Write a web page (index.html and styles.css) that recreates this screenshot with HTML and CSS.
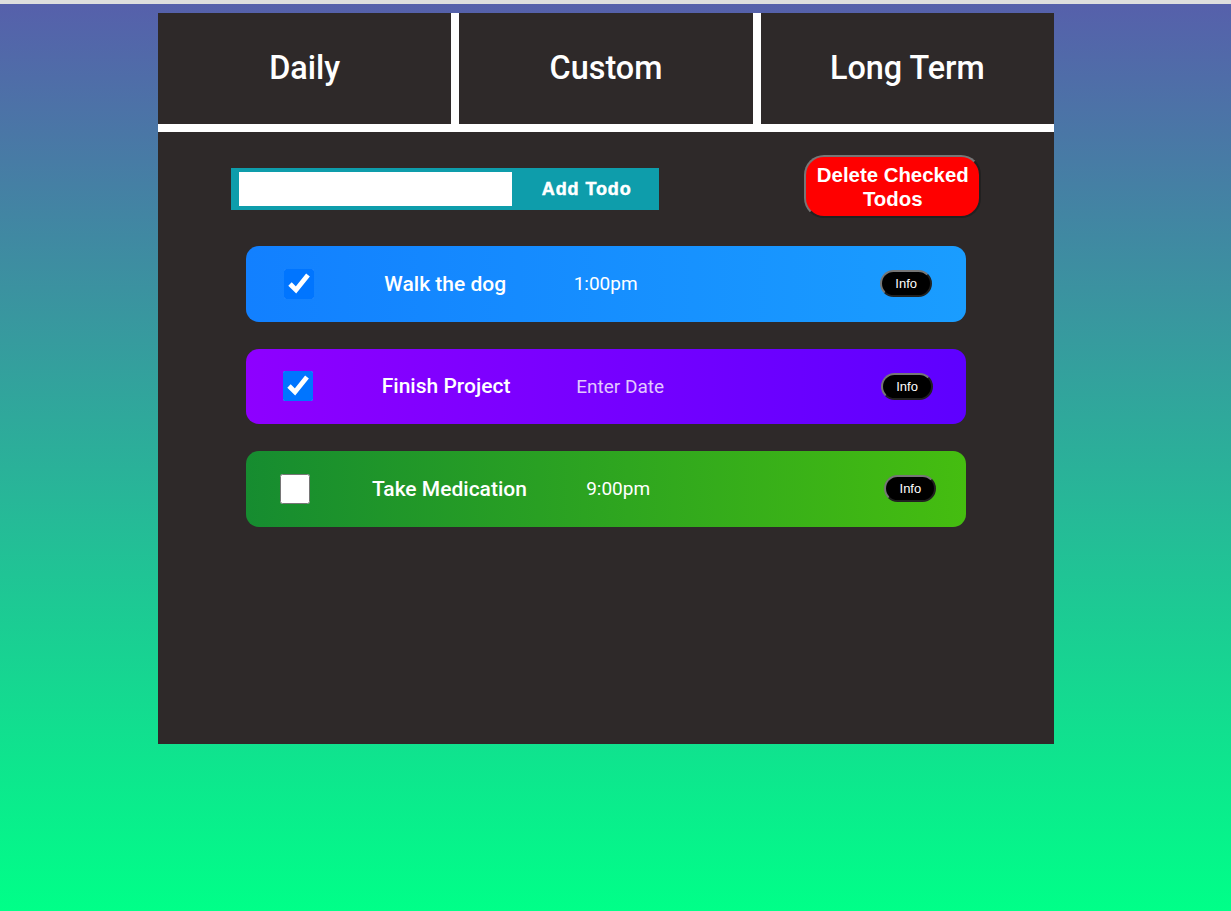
FILE: index.html
```html
<!DOCTYPE html>
<html lang="en">
<head>
<meta charset="utf-8">
<title>Todos</title>
<link rel="stylesheet" href="styles.css">
</head>
<body>
<div class="page">
  <main class="app">
    <nav class="tabs">
      <div class="tab">Daily</div>
      <div class="tab">Custom</div>
      <div class="tab">Long Term</div>
    </nav>
    <div class="toolbar">
      <form class="add-form">
        <input class="add-input" type="text">
        <button class="add-btn" type="button">Add Todo</button>
      </form>
      <button class="delete-btn" type="button">Delete Checked Todos</button>
    </div>
    <ul class="todo-list">
      <li class="todo todo-blue">
        <input class="todo-check" type="checkbox" checked>
        <span class="todo-title">Walk the dog</span>
        <input class="todo-time" type="text" value="1:00pm">
        <button class="info-btn" type="button">Info</button>
      </li>
      <li class="todo todo-purple">
        <input class="todo-check" type="checkbox" checked>
        <span class="todo-title">Finish Project</span>
        <input class="todo-time" type="text" placeholder="Enter Date">
        <button class="info-btn" type="button">Info</button>
      </li>
      <li class="todo todo-green">
        <input class="todo-check" type="checkbox">
        <span class="todo-title">Take Medication</span>
        <input class="todo-time" type="text" value="9:00pm">
        <button class="info-btn" type="button">Info</button>
      </li>
    </ul>
  </main>
</div>
</body>
</html>
```

FILE: styles.css
```css
html, body {
  margin: 0;
  padding: 0;
  background: #ffffff;
}

.page {
  min-height: 100vh;
  box-sizing: border-box;
  border-top: 4px solid #dedede;
  background: linear-gradient(180deg, #5660ab 0%, #00ff88 100%);
  background-clip: padding-box;
  padding: 9px 0 0 158px;
  font-family: Roboto, "Liberation Sans", sans-serif;
}

.app {
  width: 896px;
  height: 731px;
  background: #2e2929;
}

.tabs {
  display: grid;
  grid-template-columns: 1fr 1fr 1fr;
  gap: 8px;
  background: #ffffff;
  padding-bottom: 8px;
}

.tab {
  height: 111px;
  box-sizing: border-box;
  padding-bottom: 2px;
  background: #2e2929;
  color: #ffffff;
  font-size: 32.4px;
  font-weight: 500;
  display: flex;
  align-items: center;
  justify-content: center;
}

.toolbar {
  display: flex;
  justify-content: space-around;
  align-items: center;
  padding-top: 23px;
}

.add-form {
  display: flex;
  width: 428px;
  height: 42px;
  box-sizing: border-box;
  padding: 4px 0 4px 8px;
  background: #0e9dab;
  margin-top: 5px;
}

.add-input {
  width: 273px;
  border: none;
  margin: 0;
  padding: 0 4px;
  box-sizing: border-box;
  background: #ffffff;
  outline: none;
}

.add-btn {
  flex: 1;
  border: none;
  background: transparent;
  color: #ffffff;
  font-family: "Liberation Sans", Arial, sans-serif;
  font-weight: 700;
  font-size: 18px;
  letter-spacing: 0.9px;
  -webkit-text-stroke: 0.5px #ffffff;
  padding: 0 0 0 3px;
}

.delete-btn {
  width: 177px;
  height: 63px;
  box-sizing: border-box;
  border: 2px outset #767676;
  border-radius: 20px;
  background: #ff0000;
  color: #ffffff;
  font-family: "Liberation Sans", Arial, sans-serif;
  font-weight: 700;
  font-size: 20.4px;
  line-height: 24px;
  padding: 0 4px;
}

.todo-list {
  list-style: none;
  margin: 28px auto 0;
  padding: 0;
  width: 720px;
  display: flex;
  flex-direction: column;
  gap: 27px;
}

.todo {
  height: 75.5px;
  border-radius: 13px;
  display: flex;
  align-items: center;
  justify-content: space-around;
  color: #ffffff;
}

.todo-blue {
  background: linear-gradient(90deg, #1280ff 0%, #1a9dff 100%);
}

.todo-purple {
  background: linear-gradient(90deg, #8e00ff 0%, #5e00ff 100%);
}

.todo-green {
  background: linear-gradient(90deg, #168c30 0%, #45bd10 100%);
}

.todo-check {
  width: 30px;
  height: 30px;
  margin: 3px 3px 3px 4px;
}

.todo-title {
  font-size: 21px;
  font-weight: 500;
}

.todo-time {
  width: 239px;
  border: none;
  background: transparent;
  color: #ffffff;
  font-family: Roboto, "Liberation Sans", sans-serif;
  font-size: 19px;
  padding: 0;
  outline: none;
}

.todo-time::placeholder {
  color: #e2c8ff;
}

.info-btn {
  width: 52px;
  height: 27px;
  box-sizing: border-box;
  border: 2px outset #767676;
  border-radius: 14px;
  background: #000000;
  color: #ffffff;
  font-family: "Liberation Sans", Arial, sans-serif;
  font-size: 13px;
  padding: 0;
}
```
